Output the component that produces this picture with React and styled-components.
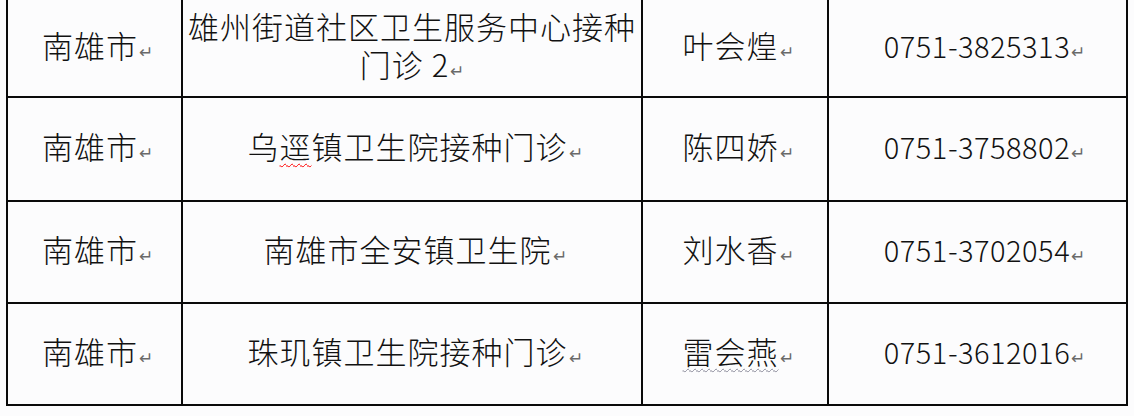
import React from 'react';
import styled, { createGlobalStyle } from 'styled-components';

const GlobalStyle = createGlobalStyle`
    html, body {
        margin: 0;
        padding: 0;
        background: #fcfcfd;
    }
    body {
        font-family: "Noto Sans CJK SC", "Noto Sans", sans-serif;
        color: #111;
    }
`

const rows = [
    { city: '南雄市', site: ['雄州街道社区卫生服务中心接种', '门诊 2'], name: '叶会煌', phone: '0751-3825313', height: 98 },
    { city: '南雄市', site: [['乌', { t: '逕', wave: 'red' }, '镇卫生院接种门诊']], name: '陈四娇', phone: '0751-3758802', height: 104 },
    { city: '南雄市', site: ['南雄市全安镇卫生院'], name: '刘水香', phone: '0751-3702054', height: 102 },
    { city: '南雄市', site: ['珠玑镇卫生院接种门诊'], name: [{ t: '雷会燕', wave: '#8a8a9a' }], phone: '0751-3612016', height: 102 },
]

// 把一段文字(可能带波浪线)渲染出来
const renderText = (part) => {
    if (typeof part === 'string') return part
    if (Array.isArray(part)) return part.map((p, i) => <React.Fragment key={i}>{renderText(p)}</React.Fragment>)
    return <Wavy $color={part.wave}>{part.t}</Wavy>
}

function App(){
    return(
        <>
            <GlobalStyle />
            <Table>
                {rows.map((row, index) => (
                    <Row key={index} $height={row.height}>
                        <Cell $width={175} $pad={6}>
                            <Text>{row.city}<Mark>↵</Mark></Text>
                        </Cell>
                        <Cell $width={460} $pad={row.site.length > 1 ? 0 : 6}>
                            <Text $multi={row.site.length > 1}>
                                {row.site.map((line, i) => (
                                    <Line key={i}>
                                        {renderText(line)}
                                        {i === row.site.length - 1 && <Mark>↵</Mark>}
                                    </Line>
                                ))}
                            </Text>
                        </Cell>
                        <Cell $width={186} $pad={6}>
                            <Text>{renderText(row.name)}<Mark>↵</Mark></Text>
                        </Cell>
                        <Cell $width={299} $pad={6}>
                            <Phone>{row.phone}<Mark>↵</Mark></Phone>
                        </Cell>
                    </Row>
                ))}
            </Table>
        </>
    )
}

const Table = styled.div`
    margin-left: 6px;
    width: 1122px;
    border-left: 2px solid #0a0a0a;
    box-sizing: border-box;
    display: flex;
    flex-direction: column;
`
const Row = styled.div`
    display: flex;
    height: ${props => props.$height}px;
    border-bottom: 2px solid #0a0a0a;
    box-sizing: border-box;
`
const Cell = styled.div`
    width: ${props => props.$width}px;
    flex: none;
    border-right: 2px solid #0a0a0a;
    box-sizing: border-box;
    display: flex;
    align-items: center;
    justify-content: center;
    padding-left: ${props => props.$pad}px;
`
const Text = styled.div`
    font-size: 31px;
    font-weight: 300;
    letter-spacing: 1px;
    line-height: ${props => props.$multi ? '38px' : '40px'};
    text-align: center;
    white-space: nowrap;
`
const Line = styled.div``
const Phone = styled.div`
    font-size: 29px;
    font-weight: 300;
    letter-spacing: 0.5px;
    line-height: 40px;
    white-space: nowrap;
    padding-left: 8px;
`
const Mark = styled.span`
    font-family: "DejaVu Sans", sans-serif;
    font-size: 17px;
    color: #6a6a6a;
    letter-spacing: 0;
    margin-left: 1px;
`
const Wavy = styled.span`
    text-decoration: underline wavy ${props => props.$color};
    text-decoration-thickness: 1px;
    text-underline-offset: 4px;
`

export default App
